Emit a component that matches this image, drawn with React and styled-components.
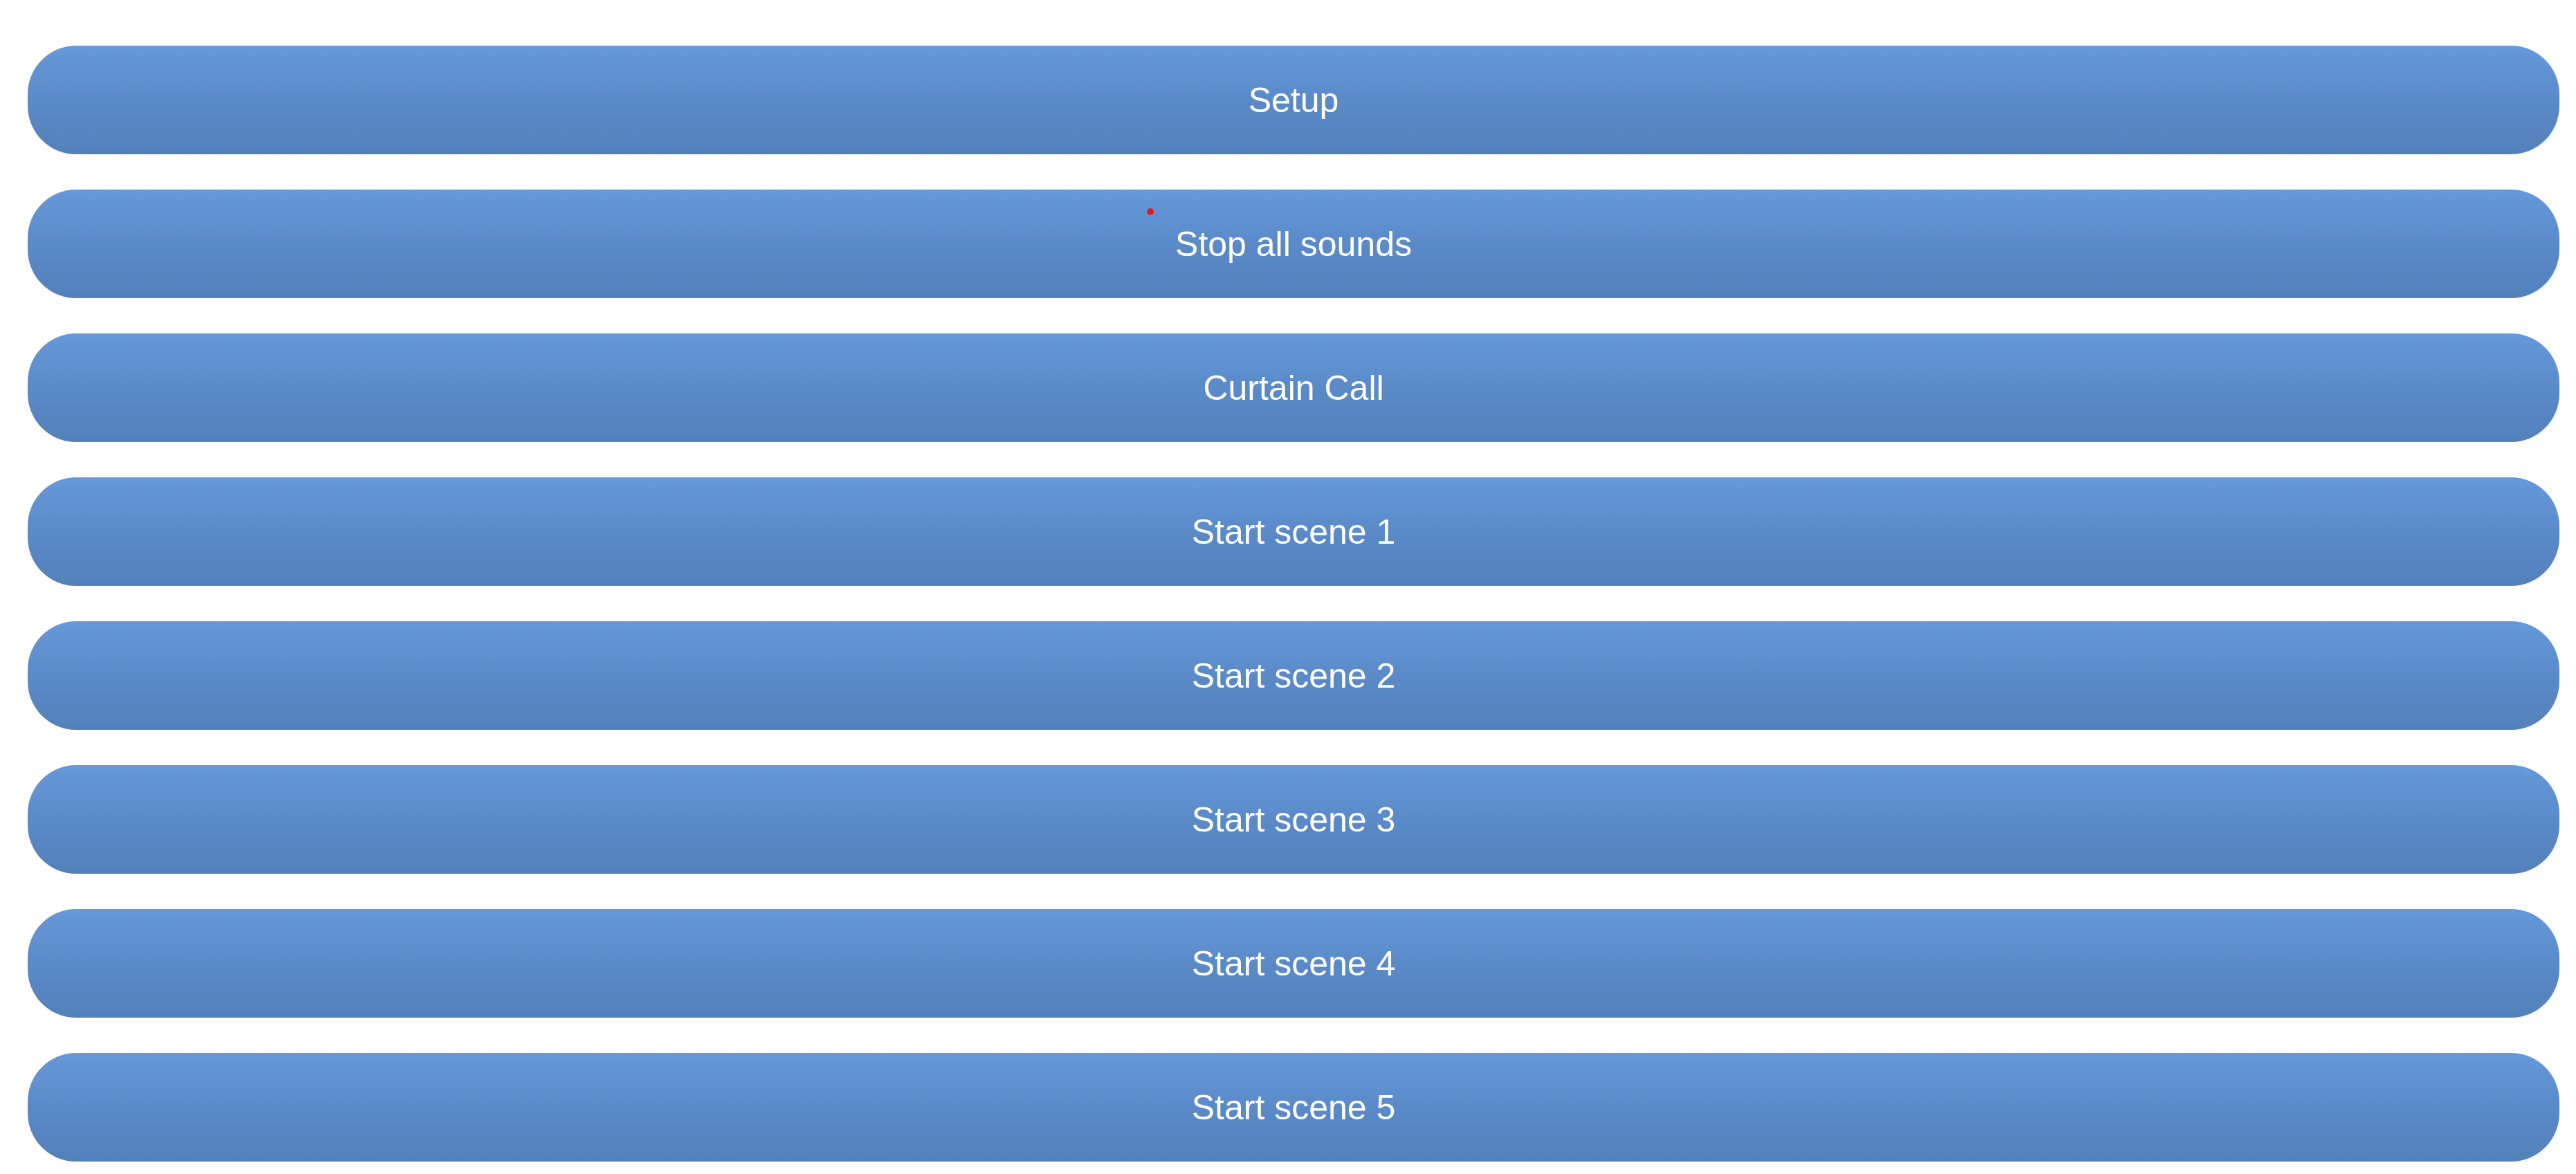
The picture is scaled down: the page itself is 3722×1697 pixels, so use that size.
import React from 'react';
import styled, { createGlobalStyle } from 'styled-components';

const GlobalStyle = createGlobalStyle`
  body {
    margin: 0;
    background: #ffffff;
    font-family: 'Liberation Sans', Arial, sans-serif;
  }
`;

const buttons = [
  'Setup',
  'Stop all sounds',
  'Curtain Call',
  'Start scene 1',
  'Start scene 2',
  'Start scene 3',
  'Start scene 4',
  'Start scene 5',
];

const App = () => {
  return (
    <>
      <GlobalStyle />
      <Page>
        {buttons.map((label, index) => (
          <CueButton key={index} type="button">
            {index === 1 && <Marker />}
            {label}
          </CueButton>
        ))}
      </Page>
    </>
  );
};

export default App;

const Page = styled.div`
  display: flex;
  flex-direction: column;
  gap: 51px;
  padding: 66px 24px 18px 40px;
`;

const CueButton = styled.button`
  position: relative;
  display: flex;
  align-items: center;
  justify-content: center;
  height: 157px;
  width: 100%;
  border: none;
  outline: none;
  border-radius: 70px;
  background: linear-gradient(180deg, #6699da 0%, #5a8ac8 50%, #5381ba 100%);
  color: #ffffff;
  font-family: 'Liberation Sans', Arial, sans-serif;
  font-size: 50px;
  font-weight: 400;
  padding: 0;
  cursor: pointer;
`;

const Marker = styled.span`
  position: absolute;
  left: 1617px;
  top: 27px;
  width: 10px;
  height: 10px;
  border-radius: 50%;
  background: #e8161c;
`;
